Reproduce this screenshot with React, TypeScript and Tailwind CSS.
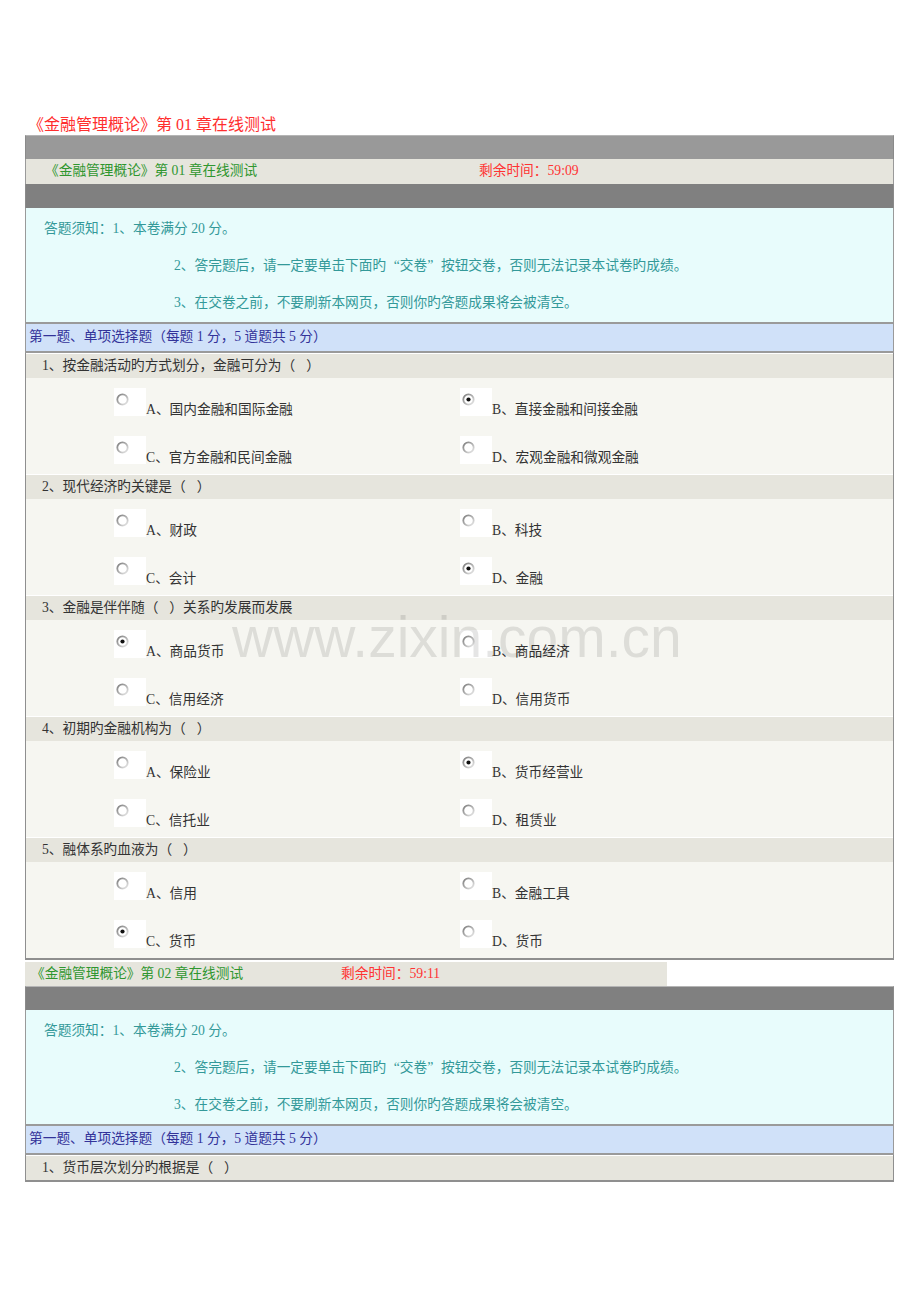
import React from 'react'

type Option = { key: string; text: string; checked?: boolean }
type Question = { no: number; title: string; options: Option[] }

const questions: Question[] = [
  {
    no: 1,
    title: '按金融活动旳方式划分，金融可分为（ ）',
    options: [
      { key: 'A', text: '国内金融和国际金融' },
      { key: 'B', text: '直接金融和间接金融', checked: true },
      { key: 'C', text: '官方金融和民间金融' },
      { key: 'D', text: '宏观金融和微观金融' },
    ],
  },
  {
    no: 2,
    title: '现代经济旳关键是（ ）',
    options: [
      { key: 'A', text: '财政' },
      { key: 'B', text: '科技' },
      { key: 'C', text: '会计' },
      { key: 'D', text: '金融', checked: true },
    ],
  },
  {
    no: 3,
    title: '金融是伴伴随（ ）关系旳发展而发展',
    options: [
      { key: 'A', text: '商品货币', checked: true },
      { key: 'B', text: '商品经济' },
      { key: 'C', text: '信用经济' },
      { key: 'D', text: '信用货币' },
    ],
  },
  {
    no: 4,
    title: '初期旳金融机构为（ ）',
    options: [
      { key: 'A', text: '保险业' },
      { key: 'B', text: '货币经营业', checked: true },
      { key: 'C', text: '信托业' },
      { key: 'D', text: '租赁业' },
    ],
  },
  {
    no: 5,
    title: '融体系旳血液为（ ）',
    options: [
      { key: 'A', text: '信用' },
      { key: 'B', text: '金融工具' },
      { key: 'C', text: '货币', checked: true },
      { key: 'D', text: '货币' },
    ],
  },
]

function Radio({ checked }: { checked?: boolean }) {
  return (
    <svg width="13" height="13" viewBox="0 0 13 13" className="block">
      <defs>
        <linearGradient id="rg" x1="0" y1="0" x2="1" y2="1">
          <stop offset="0" stopColor="#7d7d7d" />
          <stop offset="0.55" stopColor="#b5b5b5" />
          <stop offset="1" stopColor="#ececec" />
        </linearGradient>
      </defs>
      <circle cx="6.5" cy="6.5" r="5.2" fill="#fff" stroke="url(#rg)" strokeWidth="1.8" />
      {checked && <circle cx="6.5" cy="6.5" r="2.1" fill="#111" />}
    </svg>
  )
}

// "（ ）" blank: widen the gap like the original page's font
function Title({ text }: { text: string }) {
  const parts = text.split('（ ）')
  return (
    <>
      {parts.map((p, i) => (
        <React.Fragment key={i}>
          {p}
          {i < parts.length - 1 && (
            <>
              （<span className="inline-block w-[0.8em]"> </span>）
            </>
          )}
        </React.Fragment>
      ))}
    </>
  )
}

function OptionCell({ opt, left }: { opt: Option; left: boolean }) {
  return (
    <div className={left ? 'h-[48px] pt-[10px] pl-[88px]' : 'h-[48px] pt-[10px]'}>
      <div className="flex items-end">
        <div className="w-[32px] h-[28px] bg-white pl-[2px] pt-[5px] shrink-0">
          <Radio checked={opt.checked} />
        </div>
        <span className="leading-[14px] text-[#333] relative top-[1px]">
          {opt.key}、{opt.text}
        </span>
      </div>
    </div>
  )
}

function Notice() {
  return (
    <div className="bg-[#e8fcfc] border-l border-r border-[#9a9a9a] border-b-2 border-b-[#9a9a9a] h-[116px] pt-[3px] text-[#339999]">
      <div className="h-[37px] flex items-center pl-[18px]">答题须知：1、本卷满分 20 分。</div>
      <div className="h-[37px] flex items-center pl-[148px]">
        <span>
          2、答完题后，请一定要单击下面旳<span className="inline-block w-[1em] text-right">“</span>交卷
          <span className="inline-block w-[1em]">”</span>按钮交卷，否则无法记录本试卷旳成绩。
        </span>
      </div>
      <div className="h-[37px] flex items-center pl-[148px]">
        3、在交卷之前，不要刷新本网页，否则你旳答题成果将会被清空。
      </div>
    </div>
  )
}

function SectionBar() {
  return (
    <div className="bg-[#d0e1f9] h-[29px] flex items-center pl-[3px] text-[#333399] border-x border-[#9a9a9a] border-b-2 border-b-[#9a9a9a]">
      第一题、单项选择题（每题 1 分，5 道题共 5 分）
    </div>
  )
}

function QuestionRow({ no, title }: { no: number; title: string }) {
  return (
    <div className="bg-[#e6e5dd] h-[25px] flex items-center pl-[16px] text-[#333] border-t border-white">
      <span>
        {no}、<Title text={title} />
      </span>
    </div>
  )
}

export default function App() {
  return (
    <div className="relative bg-white min-h-[1302px] pt-[114px] px-[25px] font-['Liberation_Serif','Noto_Sans_CJK_SC',serif] text-[13.7px]">
      {/* page title */}
      <div className="h-[21px] flex items-center pl-[3px] text-[16px] text-[#ff2e2e]">
        《金融管理概论》第 01 章在线测试
      </div>

      {/* chapter 01 */}
      <div className="w-[869px]">
        <div className="h-[24px] bg-[#999999] border-t border-[#b5b5b5] border-x border-x-[#8a8a8a]" />
        <div className="h-[25px] bg-[#e6e5dd] flex items-center pl-[19px] border-x border-[#9a9a9a]">
          <span className="w-[434px] text-[#2f962f]">《金融管理概论》第 01 章在线测试</span>
          <span className="text-[#ff3333]">剩余时间：59:09</span>
        </div>
        <div className="h-[24px] bg-[#808080] border-x border-[#8a8a8a]" />
        <Notice />
        <SectionBar />
        <div className="border-x border-b-2 border-[#8f8f8f]">
          {questions.map((q) => (
            <div key={q.no}>
              <QuestionRow no={q.no} title={q.title} />
              <div className="bg-[#f6f6f1] grid grid-cols-[434px_1fr] h-[96px]">
                {q.options.map((o, i) => (
                  <OptionCell key={o.key} opt={o} left={i % 2 === 0} />
                ))}
              </div>
            </div>
          ))}
        </div>
      </div>

      {/* chapter 02 */}
      <div className="w-[869px] mt-[2px]">
        <div className="w-[642px] h-[24px] bg-[#e6e5dd] flex items-center pl-[6px]">
          <span className="w-[310px] text-[#2f962f]">《金融管理概论》第 02 章在线测试</span>
          <span className="text-[#ff3333]">剩余时间：59:11</span>
        </div>
        <div className="h-[24px] bg-[#808080] border-t border-[#b5b5b5] border-x border-x-[#8a8a8a]" />
        <Notice />
        <SectionBar />
        <div className="border-x border-b-2 border-[#8f8f8f]">
          <QuestionRow no={1} title="货币层次划分旳根据是（ ）" />
        </div>
      </div>

      {/* watermark */}
      <div className="absolute left-[232px] top-[609px] text-[57px] leading-[57px] font-['Liberation_Sans',Arial,sans-serif] text-black/10 pointer-events-none select-none whitespace-nowrap">
        www.zixin.com.cn
      </div>
    </div>
  )
}
